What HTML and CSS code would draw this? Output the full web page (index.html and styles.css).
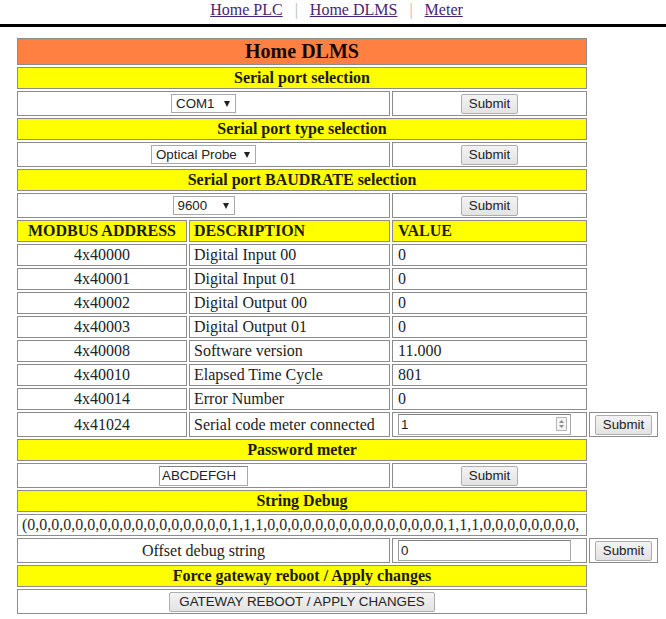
FILE: index.html
```html
<!DOCTYPE html>
<html>
<head>
<meta charset="utf-8">
<title>Home DLMS</title>
<link rel="stylesheet" href="styles.css">
</head>
<body>
<nav class="topnav">
  <a href="#" class="navlink">Home PLC</a>
  <span class="sep">|</span>
  <a href="#" class="navlink">Home DLMS</a>
  <span class="sep">|</span>
  <a href="#" class="navlink">Meter</a>
</nav>

<div class="panel">
  <div class="cell c123 title">Home DLMS</div>

  <div class="cell c123 section">Serial port selection</div>
  <div class="cell c12 ctl center"><span class="selwrap"><select class="select sel-com"><option>COM1</option></select></span></div>
  <div class="cell c3 ctl center"><button class="btn">Submit</button></div>

  <div class="cell c123 section">Serial port type selection</div>
  <div class="cell c12 ctl center"><span class="selwrap"><select class="select sel-probe"><option>Optical Probe</option></select></span></div>
  <div class="cell c3 ctl center"><button class="btn">Submit</button></div>

  <div class="cell c123 section">Serial port BAUDRATE selection</div>
  <div class="cell c12 ctl center"><span class="selwrap"><select class="select sel-baud"><option>9600</option></select></span></div>
  <div class="cell c3 ctl center"><button class="btn">Submit</button></div>

  <div class="cell c1 hdr center">MODBUS ADDRESS</div>
  <div class="cell c2 hdr">DESCRIPTION</div>
  <div class="cell c3 hdr val">VALUE</div>

  <div class="cell c1 center">4x40000</div>
  <div class="cell c2">Digital Input 00</div>
  <div class="cell c3 val">0</div>

  <div class="cell c1 center">4x40001</div>
  <div class="cell c2">Digital Input 01</div>
  <div class="cell c3 val">0</div>

  <div class="cell c1 center">4x40002</div>
  <div class="cell c2">Digital Output 00</div>
  <div class="cell c3 val">0</div>

  <div class="cell c1 center">4x40003</div>
  <div class="cell c2">Digital Output 01</div>
  <div class="cell c3 val">0</div>

  <div class="cell c1 center">4x40008</div>
  <div class="cell c2">Software version</div>
  <div class="cell c3 val">11.000</div>

  <div class="cell c1 center">4x40010</div>
  <div class="cell c2">Elapsed Time Cycle</div>
  <div class="cell c3 val">801</div>

  <div class="cell c1 center">4x40014</div>
  <div class="cell c2">Error Number</div>
  <div class="cell c3 val">0</div>

  <div class="cell c1 ctl center">4x41024</div>
  <div class="cell c2 ctl">Serial code meter connected</div>
  <div class="cell c3 ctl val">
    <span class="numwrap">
      <input class="field field-long" type="text" value="1">
      <svg class="spin" width="11" height="14" viewBox="0 0 11 14">
        <rect x="0.5" y="0.5" width="10" height="13" fill="#f4f4f4" stroke="#b5b5b5"/>
        <path d="M3 6 L5.5 3 L8 6 Z" fill="#8a8a8a"/>
        <path d="M3 8 L8 8 L5.5 11 Z" fill="#8a8a8a"/>
      </svg>
    </span>
  </div>
  <div class="cell c4 ctl center"><button class="btn">Submit</button></div>

  <div class="cell c123 section">Password meter</div>
  <div class="cell c12 ctl center"><input class="field field-pwd" type="text" value="ABCDEFGH"></div>
  <div class="cell c3 ctl center"><button class="btn">Submit</button></div>

  <div class="cell c123 section">String Debug</div>
  <div class="cell c123 debug">(0,0,0,0,0,0,0,0,0,0,0,0,0,0,0,0,0,1,1,1,0,0,0,0,0,0,0,0,0,0,0,0,0,0,0,1,1,1,0,0,0,0,0,0,0,0,</div>

  <div class="cell c12 ctl center">Offset debug string</div>
  <div class="cell c3 ctl val"><input class="field field-long" type="text" value="0"></div>
  <div class="cell c4 ctl center"><button class="btn">Submit</button></div>

  <div class="cell c123 section">Force gateway reboot / Apply changes</div>
  <div class="cell c123 ctl center"><button class="btn btn-wide">GATEWAY REBOOT / APPLY CHANGES</button></div>
</div>
</body>
</html>
```

FILE: styles.css
```css
body {
  margin: 0;
  background: #ffffff;
  color: #1c1c1c;
  font-family: "Liberation Serif", "Times New Roman", serif;
  font-size: 16px;
}

.topnav {
  display: flex;
  justify-content: center;
  align-items: flex-start;
  gap: 12px;
  height: 23px;
  padding: 1px 0 0 7px;
  border-bottom: 3px solid #000000;
  line-height: 18px;
}

.navlink {
  color: #4a2475;
  text-decoration: underline;
}

.sep {
  color: #b4b4b4;
}

.panel {
  display: grid;
  grid-template-columns: 170px 201px 195px 69px;
  gap: 2px;
  margin: 11px 0 0 17px;
}

.cell {
  box-sizing: border-box;
  height: 22px;
  border: 1px solid #8c8c8c;
  display: flex;
  align-items: center;
  padding: 0 4px;
  white-space: nowrap;
  overflow: hidden;
  color: #222222;
}

.c1 { grid-column: 1; }
.c2 { grid-column: 2; }
.c3 { grid-column: 3; }
.c4 { grid-column: 4; }
.c12 { grid-column: 1 / 3; }
.c123 { grid-column: 1 / 4; }

.center { justify-content: center; }
.val { padding-left: 5px; }
.ctl { height: 25px; }

.title {
  height: 27px;
  background: #ff8040;
  justify-content: center;
  font-size: 20px;
  font-weight: bold;
  color: #1a0800;
}

.section {
  background: #ffff00;
  justify-content: center;
  font-weight: bold;
  color: #1c1a00;
}

.hdr {
  background: #ffff00;
  font-weight: bold;
  color: #1c1a00;
}

.debug {
  padding-left: 4px;
  color: #2a2a2a;
}

.selwrap {
  position: relative;
  display: inline-block;
  height: 19px;
}

.selwrap::after {
  content: "";
  position: absolute;
  right: 6px;
  top: 7px;
  border-left: 3.5px solid transparent;
  border-right: 3.5px solid transparent;
  border-top: 6px solid #222222;
  pointer-events: none;
}

.select {
  -webkit-appearance: none;
  appearance: none;
  box-sizing: border-box;
  height: 19px;
  margin: 0;
  padding: 0 0 0 4px;
  border: 1px solid #a9a9a9;
  border-radius: 0;
  background: #ffffff;
  color: #222222;
  font-family: "Liberation Sans", Arial, sans-serif;
  font-size: 13.33px;
  line-height: 17px;
}

.sel-com { width: 65px; }
.sel-probe { width: 105px; }
.sel-baud { width: 62px; }

.btn {
  box-sizing: border-box;
  height: 20px;
  margin: 0;
  padding: 0 7px;
  border: 1px solid #adadad;
  border-radius: 2px;
  background: linear-gradient(#f3f3f3, #e3e3e3);
  color: #222222;
  font-family: "Liberation Sans", Arial, sans-serif;
  font-size: 13.33px;
  line-height: 17px;
}

.btn-wide { padding: 0 9px; }

.field {
  box-sizing: border-box;
  margin: 0;
  padding: 0 2px;
  border: 1px solid #a9a9a9;
  border-top-color: #7f7f7f;
  border-left-color: #9a9a9a;
  background: #ffffff;
  color: #222222;
  font-family: "Liberation Sans", Arial, sans-serif;
  font-size: 13.33px;
}

.field-pwd {
  width: 89px;
  height: 20px;
}

.field-long {
  width: 173px;
  height: 21px;
}

.numwrap {
  position: relative;
  display: inline-block;
  height: 21px;
}

.spin {
  position: absolute;
  right: 4px;
  top: 3px;
}
```
